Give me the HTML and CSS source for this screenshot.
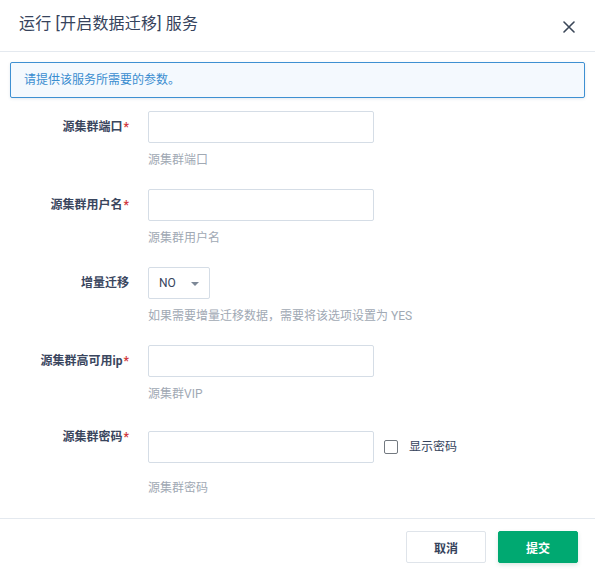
FILE: index.html
```html
<!DOCTYPE html>
<html lang="zh-CN">
<head>
<meta charset="utf-8">
<title>运行 [开启数据迁移] 服务</title>
<link rel="stylesheet" href="styles.css">
</head>
<body>
<div class="dialog">
  <div class="header">
    <div class="title">运行 [开启数据迁移] 服务</div>
    <button class="close" aria-label="关闭">
      <svg width="12" height="12" viewBox="0 0 12 12"><path d="M1 1 L11 11 M11 1 L1 11" stroke="#3b4758" stroke-width="1.6" fill="none" stroke-linecap="round"/></svg>
    </button>
  </div>
  <div class="alert">请提供该服务所需要的参数。</div>
  <form class="form">
    <div class="row">
      <label class="label">源集群端口<span class="req">*</span></label>
      <div class="field">
        <input class="input" type="text">
        <div class="help">源集群端口</div>
      </div>
    </div>
    <div class="row">
      <label class="label">源集群用户名<span class="req">*</span></label>
      <div class="field">
        <input class="input" type="text">
        <div class="help">源集群用户名</div>
      </div>
    </div>
    <div class="row">
      <label class="label">增量迁移</label>
      <div class="field">
        <div class="select"><span>NO</span><span class="caret"></span></div>
        <div class="help">如果需要增量迁移数据，需要将该选项设置为 YES</div>
      </div>
    </div>
    <div class="row">
      <label class="label">源集群高可用ip<span class="req">*</span></label>
      <div class="field">
        <input class="input" type="text">
        <div class="help">源集群VIP</div>
      </div>
    </div>
    <div class="row row-pw">
      <label class="label">源集群密码<span class="req">*</span></label>
      <div class="field">
        <div class="pw-line">
          <input class="input" type="password">
          <label class="check"><span class="box"></span><span class="check-text">显示密码</span></label>
        </div>
        <div class="help">源集群密码</div>
      </div>
    </div>
  </form>
  <div class="footer">
    <button class="btn btn-default" type="button">取消</button>
    <button class="btn btn-primary" type="button">提交</button>
  </div>
</div>
</body>
</html>
```
FILE: styles.css
```css
html, body {
  margin: 0;
  padding: 0;
  background: #fff;
}
body {
  font-family: "Roboto", "Noto Sans CJK SC", "Noto Sans", sans-serif;
  color: #36435c;
  font-size: 12px;
}
.dialog {
  width: 595px;
  height: 575px;
  display: flex;
  flex-direction: column;
  box-sizing: border-box;
}
.header {
  box-sizing: border-box;
  padding: 14px 19px 0 19px;
  border-bottom: 1px solid #e4e9ef;
  display: flex;
  justify-content: space-between;
  align-items: flex-start;
  height: 53px;
}
.title {
  font-size: 16px;
  line-height: 20px;
  color: #36435c;
  letter-spacing: 0.2px;
}
.close {
  border: 0;
  background: none;
  padding: 0;
  margin-top: 7px;
  margin-right: 1px;
  width: 12px;
  height: 12px;
  display: flex;
}
.alert {
  margin: 10px 10px 0 10px;
  height: 36px;
  box-sizing: border-box;
  border: 1px solid #3e90d2;
  border-radius: 2px;
  background: #f4f9fe;
  color: #3a8dd0;
  padding-left: 13px;
  line-height: 34px;
  font-size: 12px;
  box-shadow: 0 1px 3px rgba(40, 80, 120, 0.12);
}
.form {
  padding: 13px 0 21px 0;
  display: flex;
  flex-direction: column;
  gap: 20px;
  margin: 0;
}
.row {
  display: grid;
  grid-template-columns: 129px 1fr;
  column-gap: 19px;
  align-items: start;
}
.label {
  text-align: right;
  font-weight: 700;
  font-size: 12px;
  line-height: 32px;
  color: #3a465e;
}
.req {
  color: #d0383b;
  margin-left: 1px;
}
.row-pw .label {
  line-height: 28px;
}
.row-pw .field {
  padding-top: 8px;
}
.row-pw .help {
  margin-top: 16px;
}
.field {
  display: flex;
  flex-direction: column;
  align-items: flex-start;
}
.input {
  width: 226px;
  height: 32px;
  box-sizing: border-box;
  border: 1px solid #d5dde6;
  border-radius: 2px;
  background: #fff;
  margin: 0;
  padding: 0 10px;
  outline: none;
}
.help {
  margin-top: 8px;
  line-height: 18px;
  font-size: 12px;
  color: #a1a9b4;
}
.select {
  width: 62px;
  height: 32px;
  box-sizing: border-box;
  border: 1px solid #d5dde6;
  border-radius: 2px;
  display: flex;
  align-items: center;
  justify-content: space-between;
  padding: 0 10px 0 10px;
  font-size: 12px;
  color: #36435c;
}
.caret {
  width: 0;
  height: 0;
  border-left: 4px solid transparent;
  border-right: 4px solid transparent;
  border-top: 4px solid #7d8897;
  margin-top: 1px;
}
.pw-line {
  display: flex;
  align-items: center;
}
.check {
  display: flex;
  align-items: center;
  margin-left: 10px;
  font-size: 12px;
  color: #36435c;
}
.check-text {
  margin-bottom: 3px;
}
.box {
  width: 14px;
  height: 14px;
  box-sizing: border-box;
  border: 1.5px solid #737980;
  border-radius: 2px;
  margin-right: 11px;
}
.footer {
  border-top: 1px solid #e4e9ef;
  padding: 12px 17px 12px 0;
  display: flex;
  justify-content: flex-end;
  gap: 12px;
}
.btn {
  width: 80px;
  height: 32px;
  box-sizing: border-box;
  border-radius: 2px;
  font-family: "Roboto", "Noto Sans CJK SC", sans-serif;
  font-size: 12px;
  font-weight: 700;
  padding: 0;
}
.btn-default {
  background: #fff;
  border: 1px solid #dfe4ea;
  color: #36435c;
}
.btn-primary {
  background: #00a971;
  border: 1px solid #00a971;
  color: #fff;
  box-shadow: 0 2px 4px rgba(0, 100, 60, 0.15);
}
```
